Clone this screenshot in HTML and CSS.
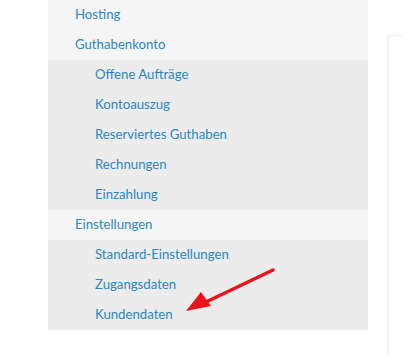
FILE: index.html
```html
<!DOCTYPE html>
<html>
<head>
    <title>Konto</title>
    <link rel="stylesheet" href="styles.css">
</head>
<body>
    <div class="page">
        <ul class="sidebar">
            <li class="top"><a href="#">Hosting</a></li>
            <li class="top"><a href="#">Guthabenkonto</a></li>
            <li class="sub"><a href="#">Offene Aufträge</a></li>
            <li class="sub"><a href="#">Kontoauszug</a></li>
            <li class="sub"><a href="#">Reserviertes Guthaben</a></li>
            <li class="sub"><a href="#">Rechnungen</a></li>
            <li class="sub"><a href="#">Einzahlung</a></li>
            <li class="top"><a href="#">Einstellungen</a></li>
            <li class="sub"><a href="#">Standard-Einstellungen</a></li>
            <li class="sub"><a href="#">Zugangsdaten</a></li>
            <li class="sub"><a href="#">Kundendaten</a></li>
        </ul>
        <div class="content"></div>
    </div>

    <svg class="arrow" width="403" height="355" viewBox="0 0 403 355">
        <line x1="273" y1="270" x2="206" y2="302" stroke="#e8141a" stroke-width="3.5" stroke-linecap="round"/>
        <polygon points="186,311 201,292 211,306" fill="#e8141a"/>
    </svg>
</body>
</html>
```

FILE: styles.css
```css
body {
    margin: 0;
    background: #fff;
    font-family: Lato, "Open Sans", sans-serif;
    font-size: 13.2px;
}
.page {
    display: flex;
    align-items: flex-start;
    padding-left: 48px;
}
.sidebar {
    list-style: none;
    margin: 0;
    padding: 0;
    width: 320px;
}
.sidebar li {
    height: 30px;
    line-height: 29px;
}
.sidebar a {
    color: #2a87c0;
    text-decoration: none;
}
.top {
    background: #f5f5f5;
    padding-left: 27px;
}
.sub {
    background: #ececec;
    padding-left: 47px;
}
.content {
    margin: 35px 0 0 20px;
    flex: 1;
    height: 330px;
    border-left: 1px solid #f0f0f0;
    border-top: 1px solid #f0f0f0;
    box-shadow: -1px 0 2px rgba(0,0,0,0.04);
}
.arrow {
    position: absolute;
    left: 0;
    top: 0;
    pointer-events: none;
}
```
